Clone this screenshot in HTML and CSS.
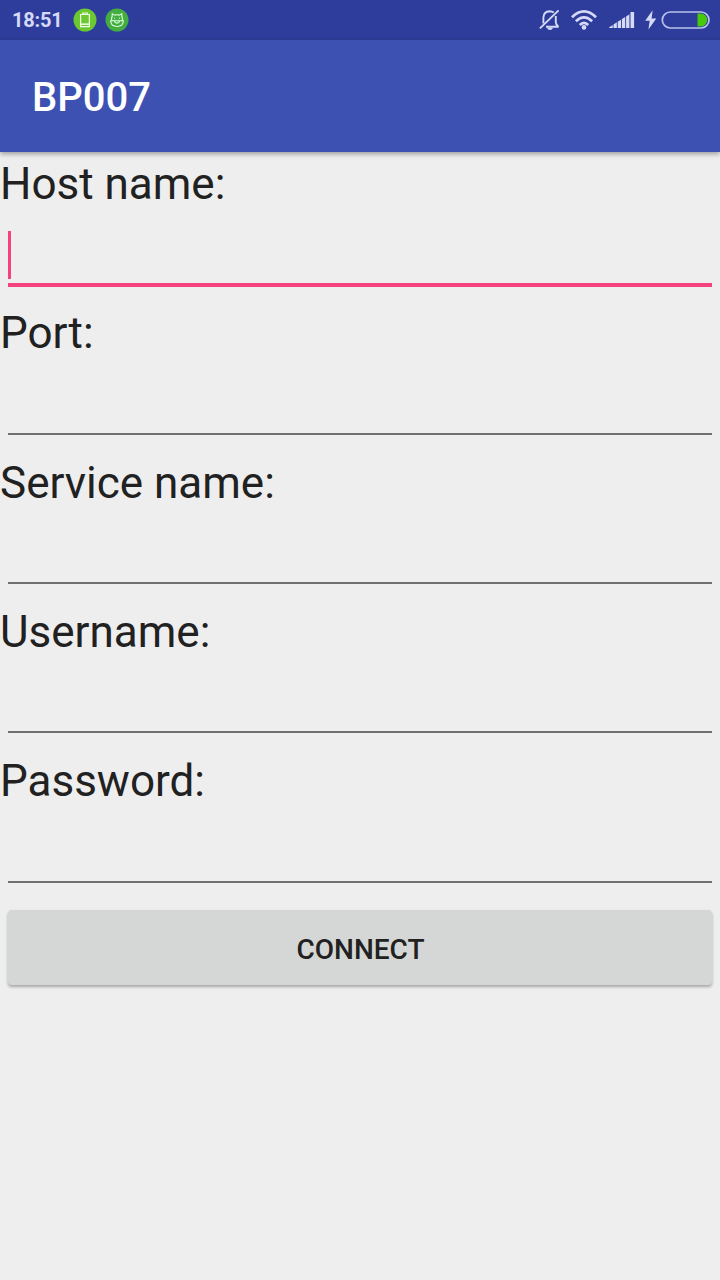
FILE: index.html
```html
<!DOCTYPE html>
<html lang="en">
<head>
<meta charset="utf-8">
<title>BP007</title>
<link rel="stylesheet" href="styles.css">
</head>
<body>
<header class="status">
  <span class="clock">18:51</span>
  <svg class="badge" width="24" height="24" viewBox="0 0 24 24">
    <circle cx="12" cy="12" r="11.5" fill="#6cc831"/>
    <path d="M9.7 6.3V5h4.6v1.3M7.6 6.5h8.8v12.2H7.6z" fill="none" stroke="#f2ffe9" stroke-width="1.2"/>
    <path d="M8 15.4h8v1.5H8z" fill="#f2ffe9"/>
  </svg>
  <svg class="badge" width="24" height="24" viewBox="0 0 24 24">
    <circle cx="12" cy="12" r="11.5" fill="#43ad42"/>
    <g fill="none" stroke="#e2ffe0" stroke-width="1.1" stroke-linecap="round" stroke-linejoin="round">
      <path d="M6.7 12.4Q6.1 10.2 7.2 8.4V5.6l2.5 1.5q2.3-.6 4.6 0l2.5-1.5v2.8q1.1 1.8.5 4M5.6 12.8h12.8q-.3 5.7-6.4 5.7t-6.4-5.7zM9.4 13q.4 2.1 2.6 2.1t2.6-2.1"/>
      <path d="M9.6 10v.2M14.4 10v.2"/>
    </g>
  </svg>
  <div class="indicators">
    <svg width="22" height="24" viewBox="0 0 22 24">
      <g fill="none" stroke="#d5daf6" stroke-width="1.9">
        <path d="M4.4 15.5V9.5Q4.6 3.6 10.6 3.2q2.4 0 4.200 1.400M16.800 8v6.300q0 2 2 3.600v.8H7"/>
        <path d="M.9 20.400 19.600 2.400"/>
      </g>
      <path d="M8 19.800h6q-.6 2.200-3 2.200t-3-2.200z" fill="#d5daf6"/>
    </svg>
    <svg class="wifi" width="26" height="22" viewBox="0 0 26 22">
      <g fill="none" stroke="#d5daf6" stroke-width="2.7">
        <path d="M1 8.200Q13-3.500 25 8.200M4.900 12.200Q13 4.400 21.100 12.200M8.800 16q4.200-4.400 8.400 0"/>
      </g>
      <circle cx="13" cy="18.400" r="2.300" fill="#d5daf6"/>
    </svg>
    <svg class="signal" width="26" height="18" viewBox="0 0 26 18">
      <path d="M.2 17v-.8l3.5-2.3V17zM4.5 17v-3.6l3.3-2.1V17zM8.700 17v-6.200l3.300-2.100V17zM12.900 17V8.100L16.200 6V17zM17.100 17V5.400l3.300-2.100V17zM21.500 17V1h3.600v16z" fill="#d5daf6"/>
    </svg>
    <svg class="bolt" width="12" height="20" viewBox="0 0 12 20">
      <path d="M7.6.2.2 10.8h4.5L3.4 19.4 11.3 8.6H6.600z" fill="#d5daf6"/>
    </svg>
    <svg width="49" height="18" viewBox="0 0 49 18">
      <path d="M36.500 2.500h3.200a6.500 6.500 0 0 1 0 13h-3.200z" fill="#46c80b"/>
      <rect x="1.300" y="1" width="46.700" height="16" rx="8" fill="none" stroke="#b9c1ed" stroke-width="1.700"/>
    </svg>
  </div>
</header>
<div class="toolbar"><h1 class="title">BP007</h1></div>
<main class="form">
  <label class="field"><span class="label">Host name:</span><span class="input focused"><span class="caret"></span></span></label>
  <label class="field"><span class="label">Port:</span><span class="input"></span></label>
  <label class="field"><span class="label">Service name:</span><span class="input"></span></label>
  <label class="field"><span class="label">Username:</span><span class="input"></span></label>
  <label class="field"><span class="label">Password:</span><span class="input"></span></label>
  <button class="connect" type="button">CONNECT</button>
</main>
</body>
</html>
```
FILE: styles.css
```css
* { box-sizing: border-box; }

body {
  margin: 0;
  min-height: 1280px;
  background: #eeeeee;
  color: #212121;
  font-family: Roboto, "Noto Sans", sans-serif;
}

.status {
  display: flex;
  align-items: center;
  height: 40px;
  padding: 0 10px 0 12px;
  background: #2e3d9b;
}

.clock {
  width: 60.5px;
  font-size: 20px;
  font-weight: 700;
  line-height: 40px;
  letter-spacing: -0.2px;
  color: #d5daf6;
}

.badge { margin-right: 8px; }

.indicators {
  display: flex;
  align-items: center;
  margin-left: auto;
}

.wifi { margin-left: 10px; }
.signal { margin: 0 10px 0 12px; }
.bolt { margin-right: 4px; }

.toolbar {
  display: flex;
  align-items: center;
  height: 112px;
  padding: 4px 32px 0;
  background: #3d51b3;
  box-shadow: 0 2px 5px rgba(0, 0, 0, 0.35);
}

.title {
  margin: 0;
  font-size: 40px;
  font-weight: 500;
  line-height: 48px;
  color: #ffffff;
}

.form {
  display: flex;
  flex-direction: column;
}

.field {
  display: flex;
  flex-direction: column;
  height: 149.33px;
}

.label {
  height: 57px;
  padding-top: 2px;
  font-size: 44px;
  line-height: 60px;
}

.input {
  display: flex;
  height: 76.5px;
  margin: 0 8px;
  border-bottom: 2px solid #707070;
}

.input.focused {
  height: 78px;
  padding-top: 22px;
  border-bottom: 4px solid #f5427f;
}

.caret {
  width: 3px;
  height: 48px;
  background: #f5427f;
}

.connect {
  height: 75px;
  margin: 11.35px 8px 0;
  padding: 5px 0 0 1px;
  border: 0;
  border-radius: 4px;
  background: #d5d7d6;
  box-shadow: 0 2px 3px rgba(0, 0, 0, 0.3);
  color: #212121;
  font-family: inherit;
  font-size: 28px;
  font-weight: 500;
}
```
